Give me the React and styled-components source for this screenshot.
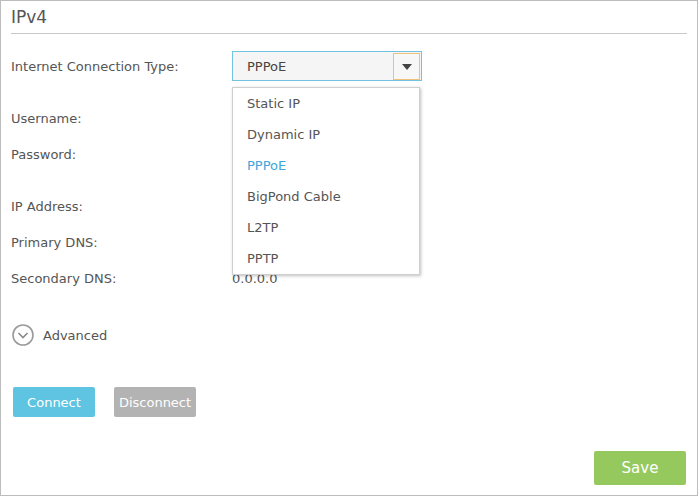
import styled, { createGlobalStyle } from "styled-components";

const GlobalStyle = createGlobalStyle`
  html, body {
    margin: 0;
    padding: 0;
    background: #fff;
  }
  body {
    font-family: "DejaVu Sans", Verdana, sans-serif;
    color: #555;
  }
`;

const Panel = styled.div`
  position: relative;
  box-sizing: border-box;
  width: 698px;
  height: 496px;
  border: 1px solid #bdbdbd;
  padding: 0 10px;
`;

const Title = styled.h2`
  margin: 0;
  padding: 4px 0 0;
  height: 28px;
  font-size: 17px;
  font-weight: normal;
  color: #555;
  line-height: 24px;
  border-bottom: 1px solid #c8c8c8;
`;

const Form = styled.div`
  padding-top: 17px;
`;

const Row = styled.div`
  display: flex;
  align-items: center;
  height: ${(p) => p.h || 36}px;
  margin-top: ${(p) => p.mt || 0}px;
  font-size: 13px;
`;

const Label = styled.div`
  width: 221px;
  flex-shrink: 0;
`;

const Value = styled.div`
  color: #555;
`;

const SelectWrap = styled.div`
  position: relative;
`;

const Select = styled.div`
  box-sizing: border-box;
  width: 190px;
  height: 30px;
  border: 1px solid #70c3e3;
  background: #f5f5f5;
  display: flex;
  align-items: center;
  padding-left: 14px;
  padding-right: 1px;
  color: #444;
`;

const SelectText = styled.span`
  flex: 1;
`;

const ArrowBox = styled.div`
  box-sizing: border-box;
  width: 27px;
  height: 27px;
  border: 1px solid #f0c277;
  display: flex;
  align-items: center;
  justify-content: center;
  background: #f7f7f7;
`;

const Arrow = styled.div`
  width: 0;
  height: 0;
  border-left: 5px solid transparent;
  border-right: 5px solid transparent;
  border-top: 6px solid #444;
  margin-top: 1px;
`;

const Menu = styled.ul`
  position: absolute;
  top: 36px;
  left: 0;
  width: 188px;
  box-sizing: border-box;
  margin: 0;
  padding: 0;
  list-style: none;
  background: #fff;
  border: 1px solid #cfcfcf;
  box-shadow: 1px 1px 3px rgba(0, 0, 0, 0.25);
  z-index: 2;
`;

const Item = styled.li`
  height: 31px;
  line-height: 31px;
  padding-left: 14px;
  font-size: 13px;
  color: ${(p) => (p.active ? "#3ea6da" : "#555")};
`;

const Advanced = styled.div`
  display: flex;
  align-items: center;
  gap: 9px;
  margin-top: 27px;
  padding-left: 1px;
  height: 24px;
  font-size: 13px;
`;

const Buttons = styled.div`
  display: flex;
  gap: 19px;
  margin-top: 40px;
  padding-left: 2px;
`;

const Button = styled.button`
  width: 82px;
  height: 30px;
  border: none;
  border-radius: 2px;
  color: #fff;
  font-family: "DejaVu Sans", Verdana, sans-serif;
  font-size: 13px;
  padding: 0;
  background: ${(p) => p.bg};
`;

const Footer = styled.div`
  display: flex;
  justify-content: flex-end;
  margin-top: 34px;
  padding-right: 1px;
`;

const SaveButton = styled(Button)`
  width: 92px;
  height: 34px;
  font-size: 15px;
  background: #96c95d;
`;

const options = ["Static IP", "Dynamic IP", "PPPoE", "BigPond Cable", "L2TP", "PPTP"];

const App = () => {
  return (
    <>
      <GlobalStyle />
      <Panel>
        <Title>IPv4</Title>
        <Form>
          <Row h={30}>
            <Label>Internet Connection Type:</Label>
            <SelectWrap>
              <Select>
                <SelectText>PPPoE</SelectText>
                <ArrowBox>
                  <Arrow />
                </ArrowBox>
              </Select>
              <Menu>
                {options.map((o) => (
                  <Item key={o} active={o === "PPPoE"}>
                    {o}
                  </Item>
                ))}
              </Menu>
            </SelectWrap>
          </Row>
          <Row mt={19}>
            <Label>Username:</Label>
          </Row>
          <Row>
            <Label>Password:</Label>
          </Row>
          <Row mt={16}>
            <Label>IP Address:</Label>
          </Row>
          <Row>
            <Label>Primary DNS:</Label>
          </Row>
          <Row>
            <Label>Secondary DNS:</Label>
            <Value>0.0.0.0</Value>
          </Row>
        </Form>
        <Advanced>
          <svg width="22" height="22" viewBox="0 0 22 22">
            <circle cx="11" cy="11" r="10" fill="none" stroke="#9a9a9a" strokeWidth="1.6" />
            <path d="M6.5 9 L11 13.5 L15.5 9" fill="none" stroke="#8a8a8a" strokeWidth="1.6" />
          </svg>
          <span>Advanced</span>
        </Advanced>
        <Buttons>
          <Button bg="#5ec4e1">Connect</Button>
          <Button bg="#b3b3b3">Disconnect</Button>
        </Buttons>
        <Footer>
          <SaveButton>Save</SaveButton>
        </Footer>
      </Panel>
    </>
  );
};

export default App;
